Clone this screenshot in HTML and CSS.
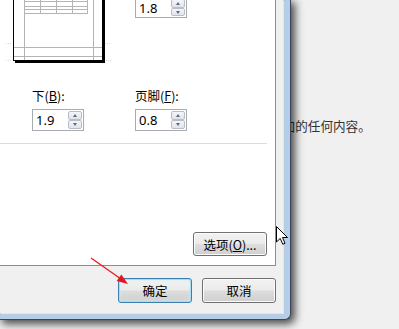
FILE: index.html
```html
<!DOCTYPE html>
<html lang="zh-CN">
<head>
  <meta charset="UTF-8">
  <meta name="viewport" content="width=device-width, initial-scale=1.0">
  <title>页面设置</title>
  <link rel="stylesheet" href="styles.css">
</head>
<body>
  <div class="doc">
    <p class="doc-line">添加的任何内容。</p>
  </div>

  <div class="window">
    <div class="face">
      <div class="panel">
        <div class="top-row">
          <svg class="preview" width="108" height="124" viewBox="5 -60 108 124">
            <!-- page shadow and sheet -->
            <rect x="15" y="-58" width="90" height="121" fill="#000"/>
            <rect x="13.5" y="-59.5" width="89" height="120" fill="#fff" stroke="#000"/>
            <!-- margin guides -->
            <g stroke="#b4b4b4" stroke-width="1">
              <line x1="24.5" y1="-60" x2="24.5" y2="60"/>
              <line x1="93.5" y1="-60" x2="93.5" y2="60"/>
              <line x1="14" y1="47.5" x2="102" y2="47.5"/>
              <line x1="14" y1="56.5" x2="102" y2="56.5"/>
            </g>
            <!-- table grid -->
            <g stroke="#b4b4b4" stroke-width="1">
              <line x1="24" y1="1.5" x2="88" y2="1.5"/>
              <line x1="24" y1="6.5" x2="88" y2="6.5"/>
              <line x1="24" y1="9.5" x2="88" y2="9.5"/>
              <line x1="24" y1="13.5" x2="88" y2="13.5"/>
              <line x1="40.5" y1="-60" x2="40.5" y2="13.5"/>
              <line x1="56.5" y1="-60" x2="56.5" y2="13.5"/>
              <line x1="72.5" y1="-60" x2="72.5" y2="13.5"/>
              <line x1="87.5" y1="-60" x2="87.5" y2="13.5"/>
            </g>
            <!-- faint guide ticks outside the sheet -->
            <g stroke="#dcdcdc" stroke-width="1" stroke-dasharray="1 1">
              <line x1="6" y1="43.5" x2="12" y2="43.5"/>
              <line x1="6" y1="60.5" x2="12" y2="60.5"/>
              <line x1="105" y1="43.5" x2="111" y2="43.5"/>
              <line x1="106" y1="60.5" x2="111" y2="60.5"/>
            </g>
          </svg>
          <div class="spin spin-top">
            <span class="spin-value">1.8</span>
            <span class="spin-btns"><span class="spin-up"></span><span class="spin-down"></span></span>
          </div>
        </div>

        <div class="fields">
          <div class="field">
            <label class="field-label">下(<u>B</u>):</label>
            <div class="spin">
              <span class="spin-value">1.9</span>
              <span class="spin-btns"><span class="spin-up"></span><span class="spin-down"></span></span>
            </div>
          </div>
          <div class="field">
            <label class="field-label">页脚(<u>F</u>):</label>
            <div class="spin">
              <span class="spin-value">0.8</span>
              <span class="spin-btns"><span class="spin-up"></span><span class="spin-down"></span></span>
            </div>
          </div>
        </div>

        <div class="sep"></div>

        <div class="options-row">
          <button type="button" class="btn btn-options">选项(<u>O</u>)...</button>
        </div>
      </div>

      <div class="footer">
        <button type="button" class="btn btn-default">确定</button>
        <button type="button" class="btn">取消</button>
      </div>
    </div>
  </div>

  <svg class="marks" width="399" height="329" viewBox="0 0 399 329">
    <!-- red annotation arrow -->
    <line x1="91" y1="258" x2="121" y2="279" stroke="#e8141b" stroke-width="1.2"/>
    <polygon points="128,284 116.7,281 121.3,274.4" fill="#e8141b"/>
    <!-- mouse pointer -->
    <path d="M276.5 226.5 V242 L280.2 238.4 L282.8 244.3 L285 243.3 L282.5 237.5 L287.5 237.5 Z" fill="#fff" stroke="#000" stroke-width="1" stroke-linejoin="round"/>
  </svg>
</body>
</html>
```

FILE: styles.css
```css
body {
  margin: 0;
  width: 399px;
  height: 329px;
  overflow: hidden;
  position: relative;
  background-color: #f0f0f0;
  font-family: "Noto Sans CJK SC", sans-serif;
  color: #000;
}
.doc {
  padding: 117px 0 0 270px;
}
.doc-line {
  margin: 0;
  font-size: 12.6px;
  line-height: 18px;
  color: #333;
  white-space: nowrap;
}
.window {
  position: absolute;
  left: 0;
  top: 0;
  width: 291px;
  height: 320px;
  box-sizing: border-box;
  padding: 0 7px 6px 0;
  background-color: #b6cde8;
  border-right: 1px solid #3b4758;
  border-bottom: 1px solid #3b4758;
  border-bottom-right-radius: 6px;
  box-shadow: 3px 3px 9px 1px rgba(0, 0, 0, 0.7);
}
.face {
  width: 283px;
  height: 313px;
  background-color: #f0f0f0;
  box-shadow: 1px 1px 0 #dce8f5;
}
.panel {
  width: 276px;
  height: 266px;
  box-sizing: border-box;
  background-color: #fff;
  border-right: 1px solid #898c95;
  border-bottom: 1px solid #898c95;
}
.top-row {
  display: flex;
  align-items: flex-start;
  height: 62px;
}
.preview {
  display: block;
  margin: -60px 0 0 5px;
}
.spin {
  display: flex;
  align-items: center;
  width: 52px;
  height: 22px;
  box-sizing: border-box;
  border: 1px solid #a8abb2;
  background-color: #fff;
  padding-left: 3px;
}
.spin-top {
  margin: -3px 0 0 22px;
  height: 21px;
}
.spin-top .spin-btns {
  height: 17px;
}
.spin-value {
  flex: 1;
  font-family: "Noto Sans", sans-serif;
  font-size: 13px;
  line-height: 18px;
  color: #000;
}
.spin-btns {
  display: flex;
  flex-direction: column;
  width: 14px;
  height: 18px;
  margin-right: 1px;
}
.spin-up, .spin-down {
  flex: 1;
  position: relative;
  border: 1px solid #b9bdc6;
  border-radius: 2px;
  background: linear-gradient(#f6f6f8, #e1e3ea);
}
.spin-up::after, .spin-down::after {
  content: "";
  position: absolute;
  left: 4px;
  top: 2px;
  border-left: 2.5px solid transparent;
  border-right: 2.5px solid transparent;
}
.spin-up::after {
  border-bottom: 3px solid #56698a;
}
.spin-down::after {
  border-top: 3px solid #56698a;
}
.fields {
  display: flex;
  gap: 51px;
  margin-top: 26px;
  padding-left: 32px;
}
.field {
  display: flex;
  flex-direction: column;
  gap: 5px;
}
.field-label {
  font-size: 12.5px;
  line-height: 16px;
  height: 16px;
  white-space: nowrap;
}
.sep {
  width: 267px;
  height: 1px;
  margin-top: 12px;
  background-color: #dcdcdc;
}
.options-row {
  display: flex;
  justify-content: flex-end;
  margin-top: 88px;
  padding-right: 8px;
}
.btn {
  width: 74px;
  height: 25px;
  padding: 0;
  border: 1px solid #707070;
  border-radius: 3px;
  background: linear-gradient(#f2f2f2 0%, #ebebeb 48%, #dddddd 52%, #cfcfcf 100%);
  box-shadow: inset 0 0 0 1px #fbfbfb;
  font-family: "Noto Sans CJK SC", sans-serif;
  font-size: 12.5px;
  color: #000;
}
.btn-options {
  height: 24px;
}
.btn-default {
  border-color: #3c7fb1;
  box-shadow: inset 0 0 0 1px #a9dcf3, inset 0 0 3px 1px #cdeefa;
}
.footer {
  display: flex;
  justify-content: flex-end;
  gap: 10px;
  padding: 12px 7px 10px 0;
}
.marks {
  position: absolute;
  left: 0;
  top: 0;
  pointer-events: none;
}
```
